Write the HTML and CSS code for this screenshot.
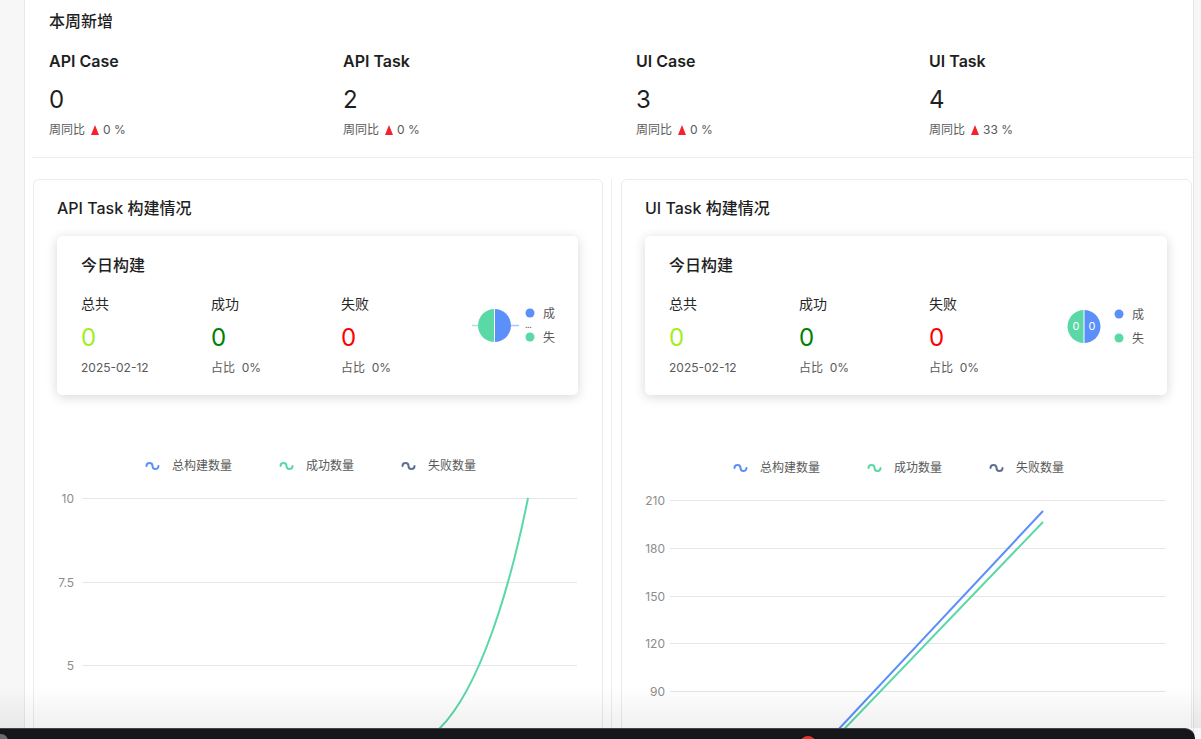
FILE: index.html
```html
<!DOCTYPE html>
<html lang="zh-CN">
<head>
<meta charset="utf-8">
<title>Dashboard</title>
<link rel="stylesheet" href="styles.css">
</head>
<body>
<div class="page">
  <aside class="side"></aside>
  <main class="main">
    <section class="weekly">
      <h2 class="weekly-title">本周新增</h2>
      <div class="weekly-grid">
        <div class="stat">
          <div class="stat-name">API Case</div>
          <div class="stat-value">0</div>
          <div class="stat-sub">周同比 <span class="up"></span> 0 %</div>
        </div>
        <div class="stat">
          <div class="stat-name">API Task</div>
          <div class="stat-value">2</div>
          <div class="stat-sub">周同比 <span class="up"></span> 0 %</div>
        </div>
        <div class="stat">
          <div class="stat-name">UI Case</div>
          <div class="stat-value">3</div>
          <div class="stat-sub">周同比 <span class="up"></span> 0 %</div>
        </div>
        <div class="stat">
          <div class="stat-name">UI Task</div>
          <div class="stat-value">4</div>
          <div class="stat-sub">周同比 <span class="up"></span> 33 %</div>
        </div>
      </div>
    </section>

    <section class="builds">
      <div class="col col-left">
        <div class="card">
          <h3 class="card-title">API Task 构建情况</h3>
          <div class="today">
            <h4 class="today-title">今日构建</h4>
            <div class="today-row">
              <div class="today-stat">
                <div class="t-label">总共</div>
                <div class="t-num lime">0</div>
                <div class="t-sub">2025-02-12</div>
              </div>
              <div class="today-stat">
                <div class="t-label">成功</div>
                <div class="t-num green">0</div>
                <div class="t-sub">占比&nbsp;&nbsp;0%</div>
              </div>
              <div class="today-stat">
                <div class="t-label">失败</div>
                <div class="t-num red">0</div>
                <div class="t-sub">占比&nbsp;&nbsp;0%</div>
              </div>
              <svg class="pie" width="100" height="64" viewBox="0 0 100 64">
                <line x1="1" y1="31.5" x2="7" y2="31.5" stroke="#a6e8cd" stroke-width="1.5"/>
                <line x1="40" y1="31.5" x2="48" y2="31.5" stroke="#a9c6fc" stroke-width="1.5"/>
                <path d="M23.5,15 A16.5,16.5 0 0 1 23.5,48 Z" fill="#5B8FF9"/>
                <path d="M23.5,48 A16.5,16.5 0 0 1 23.5,15 Z" fill="#5AD8A6"/>
                <line x1="23.5" y1="15" x2="23.5" y2="48" stroke="#fff" stroke-width="1"/>
                <text class="dots" x="54" y="34">...</text>
                <circle cx="59" cy="19" r="4.5" fill="#5B8FF9"/>
                <text class="pie-leg" x="72" y="23.5">成</text>
                <circle cx="59" cy="43" r="4.5" fill="#5AD8A6"/>
                <text class="pie-leg" x="72" y="47.5">失</text>
              </svg>
            </div>
          </div>
          <svg class="chart" width="521" height="330" viewBox="0 0 521 330">
            <path class="wave" d="M89.5,51 A3,3 0 1 1 95.5,51 A3,3 0 1 0 101.5,51" stroke="#5B8FF9"/>
            <text class="leg" x="115" y="55">总构建数量</text>
            <path class="wave" d="M223.5,51 A3,3 0 1 1 229.5,51 A3,3 0 1 0 235.5,51" stroke="#5AD8A6"/>
            <text class="leg" x="249" y="55">成功数量</text>
            <path class="wave" d="M345.5,51 A3,3 0 1 1 351.5,51 A3,3 0 1 0 357.5,51" stroke="#5D7092"/>
            <text class="leg" x="371" y="55">失败数量</text>

            <line class="grid" x1="25" y1="83.5" x2="520" y2="83.5"/>
            <line class="grid" x1="25" y1="167.5" x2="520" y2="167.5"/>
            <line class="grid" x1="25" y1="250.5" x2="520" y2="250.5"/>
            <line class="grid" x1="25" y1="334.5" x2="520" y2="334.5"/>
            <text class="tick" x="17" y="87.5">10</text>
            <text class="tick" x="17" y="171.5">7.5</text>
            <text class="tick" x="17" y="254.5">5</text>

            <path class="series" stroke="#5AD8A6" d="M352,342 C362,334 373,323 383,313 C423,273 453,173 471,83"/>
          </svg>
        </div>
      </div>

      <div class="col col-right">
        <div class="card">
          <h3 class="card-title">UI Task 构建情况</h3>
          <div class="today">
            <h4 class="today-title">今日构建</h4>
            <div class="today-row">
              <div class="today-stat">
                <div class="t-label">总共</div>
                <div class="t-num lime">0</div>
                <div class="t-sub">2025-02-12</div>
              </div>
              <div class="today-stat">
                <div class="t-label">成功</div>
                <div class="t-num green">0</div>
                <div class="t-sub">占比&nbsp;&nbsp;0%</div>
              </div>
              <div class="today-stat">
                <div class="t-label">失败</div>
                <div class="t-num red">0</div>
                <div class="t-sub">占比&nbsp;&nbsp;0%</div>
              </div>
              <svg class="pie" width="100" height="64" viewBox="0 0 100 64">
                <path d="M24,16 A16.5,16.5 0 0 1 24,49 Z" fill="#5B8FF9"/>
                <path d="M24,49 A16.5,16.5 0 0 1 24,16 Z" fill="#5AD8A6"/>
                <line x1="24" y1="16" x2="24" y2="49" stroke="#fff" stroke-width="1"/>
                <text class="pie-val" x="16" y="36">0</text>
                <text class="pie-val" x="32" y="36">0</text>
                <circle cx="59" cy="20" r="4.5" fill="#5B8FF9"/>
                <text class="pie-leg" x="72" y="24.5">成</text>
                <circle cx="59" cy="44" r="4.5" fill="#5AD8A6"/>
                <text class="pie-leg" x="72" y="48.5">失</text>
              </svg>
            </div>
          </div>
          <svg class="chart" width="521" height="330" viewBox="0 0 521 330">
            <path class="wave" d="M89.5,53 A3,3 0 1 1 95.5,53 A3,3 0 1 0 101.5,53" stroke="#5B8FF9"/>
            <text class="leg" x="115" y="57">总构建数量</text>
            <path class="wave" d="M223.5,53 A3,3 0 1 1 229.5,53 A3,3 0 1 0 235.5,53" stroke="#5AD8A6"/>
            <text class="leg" x="249" y="57">成功数量</text>
            <path class="wave" d="M345.5,53 A3,3 0 1 1 351.5,53 A3,3 0 1 0 357.5,53" stroke="#5D7092"/>
            <text class="leg" x="371" y="57">失败数量</text>

            <line class="grid" x1="25" y1="85.5" x2="521" y2="85.5"/>
            <line class="grid" x1="25" y1="133.5" x2="521" y2="133.5"/>
            <line class="grid" x1="25" y1="181.5" x2="521" y2="181.5"/>
            <line class="grid" x1="25" y1="228.5" x2="521" y2="228.5"/>
            <line class="grid" x1="25" y1="276.5" x2="521" y2="276.5"/>
            <line class="grid" x1="25" y1="324.5" x2="521" y2="324.5"/>
            <text class="tick" x="20" y="89.5">210</text>
            <text class="tick" x="20" y="137.5">180</text>
            <text class="tick" x="20" y="185.5">150</text>
            <text class="tick" x="20" y="232.5">120</text>
            <text class="tick" x="20" y="280.5">90</text>

            <path class="series" stroke="#5B8FF9" d="M176,333 L398,96"/>
            <path class="series" stroke="#5AD8A6" d="M181,333 L398,107"/>
          </svg>
        </div>
      </div>
    </section>
  </main>
  <div class="edge"></div>
</div>
<div class="dock-shade"></div>
<div class="dock"><span class="dock-dot"></span><span class="dock-left"></span></div>
</body>
</html>
```

FILE: styles.css
```css
* {
  box-sizing: border-box;
  margin: 0;
  padding: 0;
}

html,
body {
  width: 1201px;
  height: 739px;
  overflow: hidden;
}

body {
  font-family: Inter, "Noto Sans CJK SC", sans-serif;
  color: #1f1f1f;
  background: #f5f5f5;
}

.page {
  display: flex;
  height: 739px;
}

.side {
  width: 25px;
  flex: none;
  background: #f7f7f7;
  border-right: 1px solid #e9e9e9;
}

.main {
  width: 1168px;
  flex: none;
  background: #fff;
}

.edge {
  flex: 1;
  background: #f6f6f6;
  border-left: 1px solid #e4e4e4;
}

/* weekly summary */
.weekly {
  margin-left: 7px;
  padding: 10px 0 18px 17px;
  border-bottom: 1px solid #eeeeee;
}

.weekly-title {
  font-size: 16px;
  line-height: 22px;
  font-weight: 500;
  color: #1f1f1f;
}

.weekly-grid {
  display: grid;
  grid-template-columns: 294px 293px 293px 1fr;
  margin-top: 18px;
}

.stat-name {
  font-size: 16px;
  line-height: 22px;
  font-weight: 600;
  color: #1f1f1f;
}

.stat-value {
  font-size: 24px;
  line-height: 32px;
  margin-top: 12px;
  color: #1f1f1f;
}

.stat-sub {
  display: flex;
  align-items: center;
  gap: 4px;
  margin-top: 5px;
  font-size: 12px;
  line-height: 18px;
  color: #595959;
}

.up {
  display: inline-block;
  width: 0;
  height: 0;
  margin: 0 0 0 2px;
  border-left: 4px solid transparent;
  border-right: 4px solid transparent;
  border-bottom: 10px solid #f5222d;
}

/* builds */
.builds {
  display: flex;
  padding-top: 21px;
}

.col-left {
  width: 587px;
  flex: none;
  padding: 0 8px;
  border-right: 1px solid #eeeeee;
}

.col-right {
  flex: 1;
  padding-left: 9px;
  padding-right: 1px;
}

.card {
  border: 1px solid #ececec;
  border-radius: 6px;
  padding: 17px 24px 0 23px;
  height: 640px;
}

.card-title {
  font-size: 16px;
  line-height: 22px;
  font-weight: 500;
  color: #1f1f1f;
}

.today {
  margin-top: 17px;
  padding: 18px 7px 18px 24px;
  border-radius: 5px;
  background: #fff;
  box-shadow: 0 2px 12px rgba(0, 0, 0, 0.16);
}

.today-title {
  font-size: 16px;
  line-height: 22px;
  font-weight: 500;
  color: #1f1f1f;
}

.today-row {
  display: flex;
  align-items: flex-start;
  margin-top: 18px;
}

.today-stat {
  width: 130px;
  flex: none;
}

.t-label {
  font-size: 14px;
  line-height: 20px;
  color: #262626;
}

.t-num {
  margin-top: 8px;
  font-size: 24px;
  line-height: 32px;
}

.lime { color: #a2ee1e; }
.green { color: #008000; }
.red { color: #ff0000; }

.t-sub {
  margin-top: 5px;
  font-size: 12px;
  line-height: 18px;
  color: #595959;
}

.pie {
  display: block;
  margin-left: auto;
  flex: none;
}

.pie-leg {
  font-size: 12px;
  fill: #595959;
}

.pie-val {
  font-size: 11px;
  fill: #ffffff;
  text-anchor: middle;
}

.dots {
  font-size: 9px;
  fill: #666;
  letter-spacing: -0.5px;
}

.chart {
  display: block;
  margin-top: 20px;
  overflow: visible;
}

.wave {
  fill: none;
  stroke-width: 2;
  stroke-linecap: round;
}

.leg {
  font-size: 12px;
  fill: #595959;
}

.grid {
  stroke: #e6e6e6;
  stroke-width: 1;
}

.tick {
  font-size: 12px;
  fill: #8c8c8c;
  text-anchor: end;
}

.series {
  fill: none;
  stroke-width: 2;
}

/* overlay of the OS dock at the bottom */
.dock-shade {
  position: fixed;
  left: 0;
  right: 0;
  bottom: 11px;
  height: 42px;
  background: linear-gradient(to bottom, rgba(0, 0, 0, 0), rgba(0, 0, 0, 0.06));
  pointer-events: none;
}

.dock {
  position: fixed;
  left: 0;
  bottom: 0;
  width: 1195px;
  height: 11px;
  background: #15161a;
  border-top: 1px solid #45464a;
  border-top-right-radius: 10px;
  overflow: hidden;
}

.dock-dot {
  position: absolute;
  left: 800px;
  top: 7px;
  width: 16px;
  height: 16px;
  border-radius: 50%;
  background: #e8332b;
}

.dock-left {
  position: absolute;
  left: -6px;
  top: 5px;
  width: 14px;
  height: 14px;
  border-radius: 50%;
  background: #6a6b70;
}
```
